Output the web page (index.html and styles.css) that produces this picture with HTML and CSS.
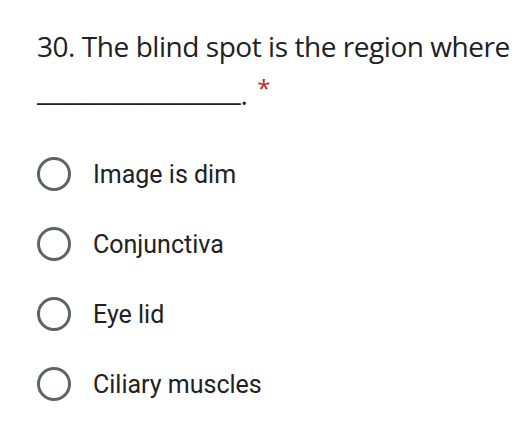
FILE: index.html
```html
<!DOCTYPE html>
<html>
<head>
<meta charset="utf-8">
<link rel="stylesheet" href="styles.css">
</head>
<body>
<div class="card">
  <div class="title">30. The blind spot is the region where<br><span class="blank">_________________</span>.<span class="req">*</span></div>
  <div class="options">
    <label class="opt"><span class="radio"></span><span class="txt">Image is dim</span></label>
    <label class="opt"><span class="radio"></span><span class="txt">Conjunctiva</span></label>
    <label class="opt"><span class="radio"></span><span class="txt">Eye lid</span></label>
    <label class="opt"><span class="radio"></span><span class="txt">Ciliary muscles</span></label>
  </div>
</div>
</body>
</html>
```
FILE: styles.css
```css
html, body {
  margin: 0;
  padding: 0;
  background: #fff;
}
.card {
  padding: 25px 0 0 37px;
  width: 519px;
  box-sizing: border-box;
  overflow: hidden;
}
.title {
  font-family: "Open Sans", sans-serif;
  font-size: 28px;
  line-height: 42px;
  letter-spacing: -0.45px;
  color: #202124;
  white-space: nowrap;
}
.blank {
  letter-spacing: -0.3px;
  vertical-align: 4px;
}
.req {
  color: #c5221f;
  font-size: 24px;
  margin-left: 10px;
  vertical-align: 8px;
}
.options {
  display: flex;
  flex-direction: column;
  margin-top: 42px;
  gap: 36px;
}
.opt {
  display: flex;
  align-items: center;
  height: 34px;
}
.radio {
  width: 28px;
  height: 28px;
  border: 3px solid #5f6368;
  border-radius: 50%;
  flex: none;
}
.txt {
  margin-left: 22px;
  font-family: Roboto, sans-serif;
  font-size: 25px;
  color: #202124;
}
```
